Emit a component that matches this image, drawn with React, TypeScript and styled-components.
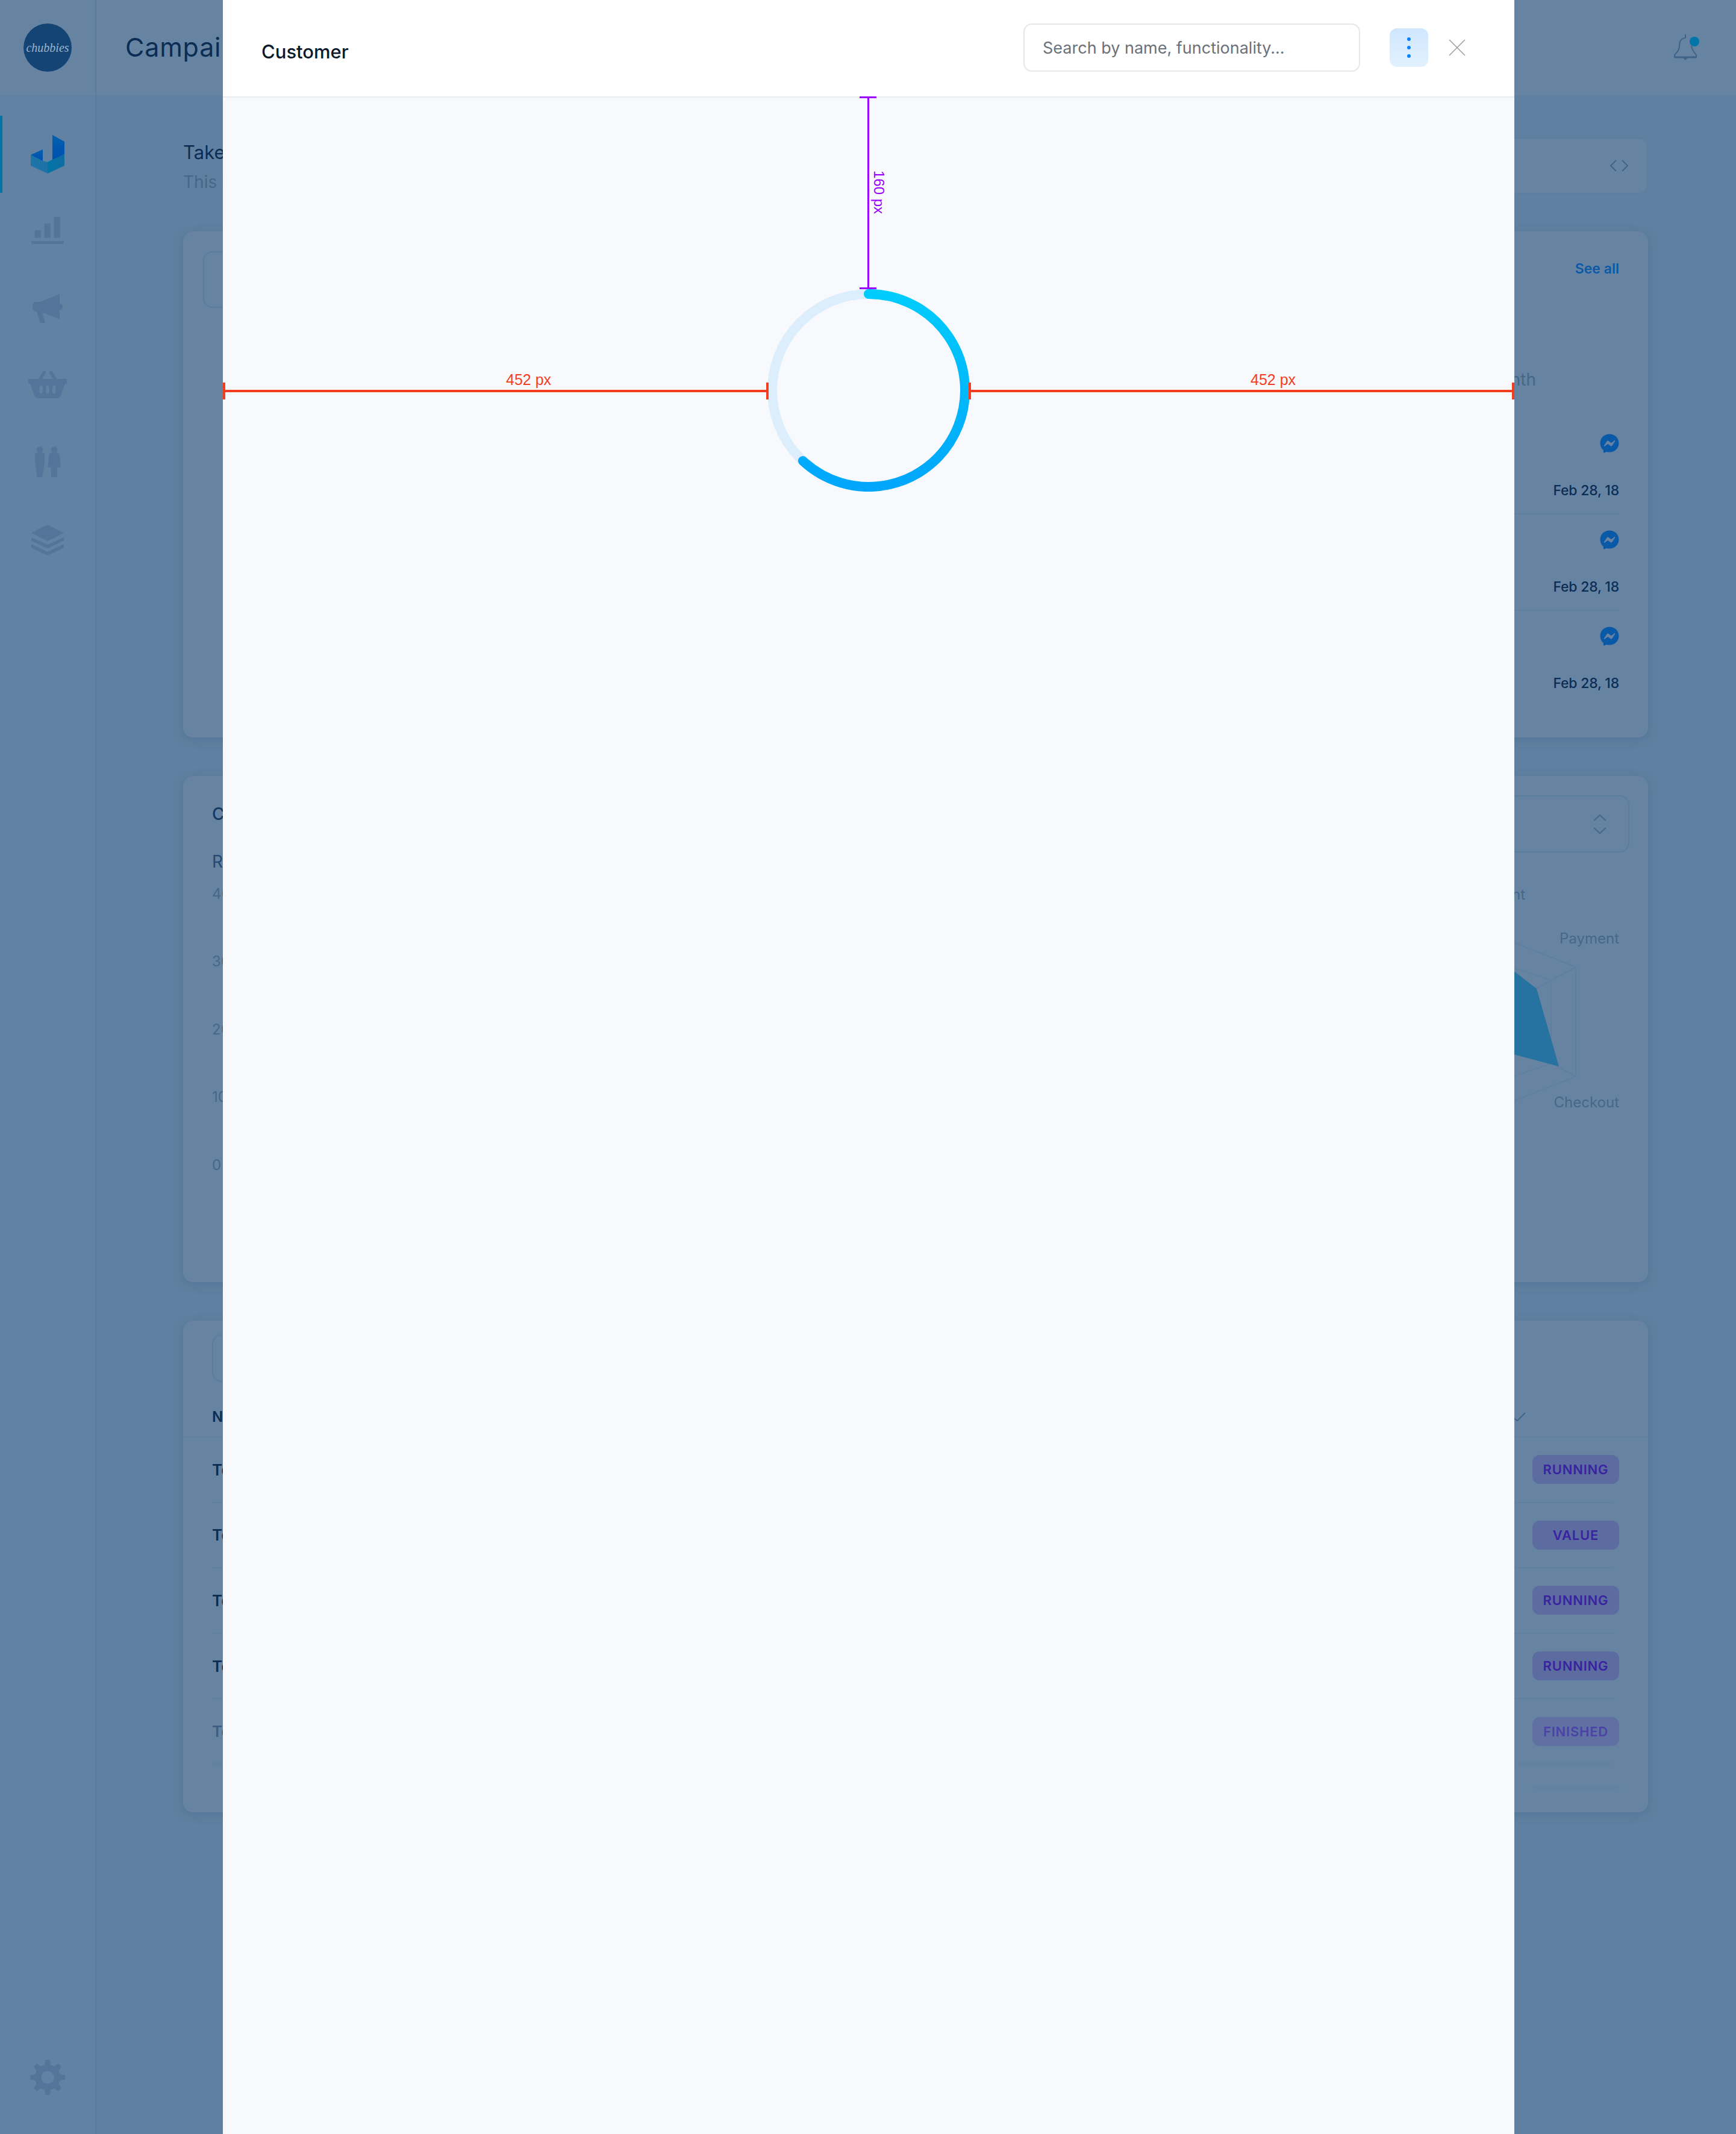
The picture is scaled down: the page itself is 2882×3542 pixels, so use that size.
import React from "react";
import styled, { createGlobalStyle } from "styled-components";
import { FaFacebookMessenger } from "react-icons/fa";

const GlobalStyle = createGlobalStyle`
  body {
    margin: 0;
    background: #5f80a0;
    font-family: Inter, "Noto Sans", sans-serif;
  }
`;

const Page = styled.div`
  position: relative;
  display: flex;
  width: 2882px;
  height: 3542px;
  overflow: hidden;
  background: #5f80a0;
`;

/* sidebar */

const Sidebar = styled.aside`
  flex: 0 0 160px;
  box-sizing: border-box;
  display: flex;
  flex-direction: column;
  background: #6182a2;
  border-right: 2px solid #5a7b9b;
  padding-bottom: 64px;
`;

const LogoCell = styled.div`
  flex: 0 0 160px;
  box-sizing: border-box;
  display: flex;
  align-items: center;
  justify-content: center;
  background: #6684a2;
  border-bottom: 2px solid #5e7f9f;
`;

const Logo = styled.div`
  width: 80px;
  height: 80px;
  border-radius: 50%;
  background: #134474;
  color: #9db6cf;
  display: flex;
  align-items: center;
  justify-content: center;
  font-family: "Liberation Serif", serif;
  font-style: italic;
  font-size: 20px;
`;

const Nav = styled.nav`
  display: flex;
  flex-direction: column;
  padding-top: 32px;
`;

const NavItem = styled.div<{ $active?: boolean; $lift?: boolean }>`
  box-sizing: border-box;
  height: 128px;
  display: flex;
  align-items: center;
  justify-content: center;
  padding-bottom: ${({ $lift }) => ($lift ? "3px" : "0")};
  box-shadow: ${({ $active }) => ($active ? "inset 4px 0 0 #0075aa" : "none")};
`;

const SettingsItem = styled.div`
  margin-top: auto;
  display: flex;
  justify-content: center;
`;

/* page behind the panel */

const Main = styled.main`
  flex: 1;
  display: flex;
  flex-direction: column;
`;

const Topbar = styled.header`
  flex: 0 0 160px;
  box-sizing: border-box;
  display: flex;
  align-items: center;
  justify-content: space-between;
  padding: 0 59px 0 48px;
  background: #6684a2;
  border-bottom: 2px solid #5e7f9f;
`;

const Title = styled.h1`
  margin: 0 0 3px;
  font-size: 43px;
  font-weight: 400;
  letter-spacing: 0.8px;
  color: #0b2d54;
`;

const Content = styled.div`
  display: flex;
  flex-direction: column;
  gap: 64px;
  padding: 68px 146px 0 144px;
`;

const IntroRow = styled.div`
  display: flex;
  justify-content: space-between;
  height: 94px;
  margin-bottom: -2px;
`;

const IntroText = styled.div`
  display: flex;
  flex-direction: column;
  padding-top: 1px;
`;

const IntroTitle = styled.div`
  font-size: 31px;
  line-height: 48px;
  color: #0b2d54;
`;

const IntroSub = styled.div`
  font-size: 28px;
  line-height: 50px;
  color: #456788;
`;

const CodeBox = styled.div`
  width: 1200px;
  box-sizing: border-box;
  display: flex;
  align-items: center;
  justify-content: flex-end;
  padding-right: 30px;
  border: 2px solid #5d7f9f;
  border-radius: 16px;
  background: #6684a2;
`;

const Card = styled.section<{ $height: number }>`
  box-sizing: border-box;
  height: ${({ $height }) => $height}px;
  background: #6684a2;
  border-radius: 16px;
  box-shadow: 0 4px 16px rgba(60, 95, 130, 0.3);
  overflow: hidden;
`;

const SplitCard = styled(Card)`
  display: flex;
  justify-content: space-between;
  align-items: flex-start;
`;

const OutlineBox = styled.div<{ $width: number; $height: number }>`
  width: ${({ $width }) => $width}px;
  height: ${({ $height }) => $height}px;
  box-sizing: border-box;
  border: 2px solid #5b7d9d;
  border-radius: 16px;
  display: flex;
  align-items: center;
  justify-content: flex-end;
  padding-right: 36px;
`;

const InsetLeft = styled.div`
  padding: 33px 0 0 33px;
`;

const ActivityColumn = styled.div`
  width: 400px;
  margin-right: 48px;
  padding-top: 46px;
  display: flex;
  flex-direction: column;
  align-items: stretch;
`;

const SeeAll = styled.a`
  align-self: flex-end;
  font-size: 23px;
  line-height: 32px;
  font-weight: 600;
  color: #0a58a8;
`;

const MonthLabel = styled.div`
  align-self: flex-end;
  margin: 148px 138px 0 0;
  font-size: 28px;
  line-height: 40px;
  color: #456788;
`;

const ActivityList = styled.div`
  margin-top: 44px;
`;

const ActivityRow = styled.div`
  box-sizing: border-box;
  height: 160px;
  padding-top: 26px;
  display: flex;
  flex-direction: column;
  align-items: flex-end;
  border-bottom: 2px solid #617f9e;

  &:last-child {
    border-bottom: none;
  }
`;

const MessengerIcon = styled(FaFacebookMessenger)`
  width: 32px;
  height: 32px;
  color: #0a58a8;
`;

const DateText = styled.div`
  margin-top: 47px;
  font-size: 23px;
  font-weight: 500;
  line-height: 30px;
  letter-spacing: -0.2px;
  color: #0b2d54;
`;

const ChartLeft = styled.div`
  padding: 43px 0 0 48px;
  display: flex;
  flex-direction: column;
`;

const ChartTitle = styled.div`
  font-size: 28px;
  line-height: 40px;
  font-weight: 500;
  color: #123a63;
`;

const ChartSubtitle = styled.div`
  margin-top: 39px;
  font-size: 28px;
  line-height: 40px;
  color: #244a72;
`;

const AxisList = styled.div`
  margin-top: 18px;
  display: flex;
  flex-direction: column;
  gap: 80.4px;
`;

const AxisLabel = styled.div`
  font-size: 24px;
  line-height: 32px;
  color: #456788;
`;

const ChartRight = styled.div`
  width: 505px;
  margin-right: 31px;
  padding-top: 32px;
  display: flex;
  flex-direction: column;
  align-items: flex-end;
`;

const RadarSvg = styled.svg`
  display: block;
  font-family: Inter, sans-serif;
  font-size: 24px;
`;

const TableTools = styled.div`
  padding: 23px 0 0 48px;
`;

const TableHead = styled.div`
  height: 92px;
  box-sizing: border-box;
  padding: 24px 203px 0 48px;
  display: flex;
  align-items: center;
  justify-content: space-between;
  border-bottom: 2px solid #617f9e;
`;

const HeadCell = styled.div`
  font-size: 24px;
  font-weight: 600;
  color: #0b2d54;
`;

const TableRow = styled.div`
  box-sizing: border-box;
  height: 108.6px;
  margin: 0 58px 0 48px;
  display: flex;
  align-items: center;
  justify-content: space-between;
  border-bottom: 2px solid #617f9e;
`;

const RowName = styled.div<{ $faded?: boolean }>`
  font-size: 26px;
  font-weight: 600;
  color: ${({ $faded }) => ($faded ? "#3c5f83" : "#0b2d54")};
`;

const Badge = styled.div<{ $faded?: boolean }>`
  box-sizing: border-box;
  width: 144px;
  height: 48px;
  margin-right: -10px;
  border-radius: 12px;
  display: flex;
  align-items: center;
  justify-content: center;
  font-size: 22px;
  font-weight: 600;
  letter-spacing: 0.8px;
  background: ${({ $faded }) => ($faded ? "#6070a3" : "#5c6ca0")};
  color: ${({ $faded }) => ($faded ? "#4b42a6" : "#3a22a0")};
`;

const FadedBadgeEdge = styled.div`
  width: 144px;
  height: 6px;
  margin: 35px 48px 0 auto;
  background: #6076a2;
  opacity: 0.3;
  filter: blur(3px);
`;

/* customer panel */

const Panel = styled.div`
  position: absolute;
  top: 0;
  left: 370px;
  bottom: 0;
  width: 2144px;
  display: flex;
  flex-direction: column;
  background: #f8f9fd;
`;

const PanelHeader = styled.header`
  flex: 0 0 162px;
  box-sizing: border-box;
  display: flex;
  align-items: center;
  padding: 0 81px 2px 64px;
  background: #fff;
  border-bottom: 2px solid #e9ebf0;
`;

const PanelTitle = styled.h2`
  flex: 1;
  margin: 13px 0 0;
  font-size: 31px;
  font-weight: 500;
  color: #0a1a2b;
`;

const SearchBox = styled.input`
  width: 559px;
  height: 80px;
  box-sizing: border-box;
  padding: 0 30px;
  border: 2px solid #e6e7ea;
  border-radius: 14px;
  background: #fff;
  font-family: Inter, sans-serif;
  font-size: 27px;

  &::placeholder {
    color: #6b7178;
    opacity: 1;
  }
`;

const MenuButton = styled.button`
  width: 64px;
  height: 64px;
  margin-left: 49px;
  padding: 0;
  border: none;
  border-radius: 12px;
  background: linear-gradient(180deg, #cfe6fd, #e2f1ff);
  display: flex;
  flex-direction: column;
  align-items: center;
  justify-content: center;
  gap: 8px;
`;

const MenuDot = styled.span`
  width: 6px;
  height: 6px;
  border-radius: 50%;
  background: #0a84ff;
`;

const CloseButton = styled.button`
  width: 28px;
  height: 28px;
  margin-left: 34px;
  padding: 0;
  border: none;
  background: none;
  display: block;
`;

const PanelBody = styled.div`
  flex: 1;
  position: relative;
  display: flex;
  justify-content: center;
  align-items: flex-start;
  padding-top: 318px;
`;

const Spinner = styled.svg`
  display: block;
`;

const HMeasure = styled.div<{ $left: number; $width: number }>`
  position: absolute;
  top: 485px;
  left: ${({ $left }) => $left}px;
  width: ${({ $width }) => $width}px;
  height: 4px;
  background: #f43c1e;

  &::before,
  &::after {
    content: "";
    position: absolute;
    top: -12px;
    width: 4px;
    height: 28px;
    background: #f43c1e;
  }

  &::before {
    left: 0;
  }

  &::after {
    right: 0;
  }
`;

const HLabel = styled.span<{ $left: number }>`
  position: absolute;
  left: ${({ $left }) => $left}px;
  top: -32px;
  font-family: "Liberation Sans", Arial, sans-serif;
  font-size: 25px;
  line-height: 30px;
  color: #f43c1e;
`;

const VMeasure = styled.div`
  position: absolute;
  top: -2px;
  left: 1070px;
  width: 3px;
  height: 320px;
  background: #9a00ff;

  &::before,
  &::after {
    content: "";
    position: absolute;
    left: -13px;
    width: 28px;
    height: 3px;
    background: #9a00ff;
  }

  &::before {
    top: 0;
  }

  &::after {
    bottom: 0;
  }
`;

const VLabel = styled.span`
  position: absolute;
  top: 123px;
  left: 6px;
  writing-mode: vertical-rl;
  font-family: "Liberation Sans", Arial, sans-serif;
  font-size: 24px;
  line-height: 26px;
  color: #9a00ff;
`;

const iconFill = "#53759a";

const BrandIcon = () => (
  <svg width="56" height="64" viewBox="0 0 56 64">
    <defs>
      <linearGradient id="brandUp" x1="0" y1="0" x2="0" y2="1">
        <stop offset="0" stopColor="#0161ad" />
        <stop offset="1" stopColor="#004eb0" />
      </linearGradient>
      <linearGradient id="brandBand" x1="0" y1="0" x2="1" y2="0">
        <stop offset="0" stopColor="#1e74a8" />
        <stop offset="0.5" stopColor="#1d73a8" />
        <stop offset="0.5" stopColor="#0074a6" />
        <stop offset="1" stopColor="#116ca0" />
      </linearGradient>
    </defs>
    <path d="M36 0 56 11V32L36 42Z" fill="url(#brandUp)" />
    <path d="M20 24V44L0 33Z" fill="url(#brandUp)" />
    <path d="M0 33 20 43 28 45 36 41 56 32V51L28 64 0 51Z" fill="url(#brandBand)" />
  </svg>
);

const BarsIcon = () => (
  <svg width="54" height="45" viewBox="0 0 54 45" fill={iconFill}>
    <rect x="5.5" y="22" width="10.5" height="13" />
    <rect x="21.5" y="11" width="10.5" height="24" />
    <rect x="37.5" y="0" width="10.5" height="35" />
    <path d="M0 40H54V42A3 3 0 0 1 51 45H3A3 3 0 0 1 0 42Z" />
  </svg>
);

const MegaphoneIcon = () => (
  <svg width="50" height="48" viewBox="0 0 50 48" fill={iconFill}>
    <path d="M45 0V42L13 29H6A6 6 0 0 1 0 23V19A6 6 0 0 1 6 13H13Z" />
    <circle cx="44" cy="21" r="6" />
    <path d="M7 29H16L21 48H13Z" />
  </svg>
);

const BasketIcon = () => (
  <svg width="64" height="45" viewBox="0 0 64 45" fill={iconFill}>
    <path
      fillRule="evenodd"
      d="M0 13H64V21H61L53 42Q52 45 49 45H15Q12 45 11 42L3 21H0ZM21 24Q18.500 24 18.500 26.500V34.500Q18.500 37 21 37T24 34.500V26.500Q24 24 21 24ZM32 24Q29.300 24 29.300 26.500V34.500Q29.300 37 32 37T34.700 34.500V26.500Q34.700 24 32 24ZM43 24Q40 24 40 26.500V34.500Q40 37 43 37T45.500 34.500V26.500Q45.500 24 43 24Z"
    />
    <path d="M20 13 26.500 2M44 13 37.500 2" stroke={iconFill} strokeWidth="5.500" strokeLinecap="round" />
  </svg>
);

const PeopleIcon = () => (
  <svg width="43" height="51" viewBox="0 0 43 51" fill={iconFill}>
    <circle cx="8" cy="5.500" r="5.300" />
    <path d="M4 10.500H12.500Q16.300 10.500 16.300 14.500V25L12.500 51H3.500L0 25V14.500Q0 10.500 4 10.500Z" />
    <circle cx="32" cy="5.500" r="5.300" />
    <path d="M27 10.500H37Q40.300 10.500 40.700 14L43 34.500H37L36.800 51H27L26.500 34.500H21.300L23.500 14Q24 10.500 27 10.500Z" />
  </svg>
);

const LayersIcon = () => (
  <svg width="54" height="51" viewBox="0 0 54 51" fill={iconFill}>
    <path d="M27 0 54 13.500 27 27 0 13.500Z" />
    <path d="M0 21 27 33 54 21V26.500L27 39 0 26.500Z" />
    <path d="M0 32 27 45 54 32V38L27 51 0 38Z" />
  </svg>
);

const GearIcon = () => (
  <svg width="60" height="60" viewBox="-30 -30 60 60" fill={iconFill}>
    <circle r="16" fill="none" stroke={iconFill} strokeWidth="10.500" />
    {[0, 45, 90, 135, 180, 225, 270, 315].map((angle) => (
      <path key={angle} d="M-3.500 -29H3.500L5.500 -19H-5.500Z" transform={`rotate(${angle})`} />
    ))}
  </svg>
);

const BellIcon = () => (
  <svg width="46" height="44" viewBox="0 0 46 44" fill="none">
    <path
      d="M21 0V6M21 6C14 6 11 12 11 19C11 27 6 31 3 34V38H39V34C36 31 32 27 31 19"
      stroke="#3f6387"
      strokeWidth="2"
    />
    <path d="M3 38H39" stroke="#3f6387" strokeWidth="3" />
    <path d="M17 39H25L21 43Z" fill="#3f6387" />
    <circle cx="36" cy="12" r="8" fill="#0075aa" />
  </svg>
);

const CodeIcon = () => (
  <svg width="32" height="20" viewBox="0 0 32 20" fill="none" stroke="#3f6387" strokeWidth="2">
    <path d="M11 1 2 10 11 19M21 1 30 10 21 19" />
  </svg>
);

const SortIcon = () => (
  <svg width="22" height="34" viewBox="0 0 22 34" fill="none" stroke="#41678a" strokeWidth="2">
    <path d="M1 11 11 2 21 11M1 23 11 32 21 23" />
  </svg>
);

const CheckIcon = () => (
  <svg width="24" height="15" viewBox="0 0 24 15" fill="none" stroke="#3f6387" strokeWidth="2">
    <path d="M0 7 10 14 23 1" />
  </svg>
);

const RadarChart = () => (
  <RadarSvg width="505" height="440" viewBox="2200 1415 505 440">
    <g fill="none" stroke="#5e7f9e" strokeWidth="2">
      <path d="M2200 1440 2616 1605V1787L2200 1950" />
      <path d="M2300 1535 2575 1627V1765L2300 1860" />
      <path d="M2400 1610 2535 1649V1741L2400 1790" />
      <path d="M2616 1605 2535 1649M2616 1787 2535 1741" />
    </g>
    <path d="M2400 1525 2551 1641 2588 1770 2400 1720Z" fill="#2672a0" />
    <g fill="#456788">
      <text x="2532" y="1493" textAnchor="end">Engagement</text>
      <text x="2688" y="1566" textAnchor="end">Payment</text>
      <text x="2688" y="1838" textAnchor="end">Checkout</text>
    </g>
  </RadarSvg>
);

const activityRows = ["a", "b", "c"];
const axisValues = ["400", "300", "200", "100", "0"];
const tableRows = [
  { name: "Test", status: "RUNNING" },
  { name: "Test", status: "VALUE" },
  { name: "Test", status: "RUNNING" },
  { name: "Test", status: "RUNNING" },
  { name: "Test", status: "FINISHED", faded: true },
];

const App = () => {
  return (
    <Page>
      <GlobalStyle />
      <Sidebar>
        <LogoCell>
          <Logo>chubbies</Logo>
        </LogoCell>
        <Nav>
          <NavItem $active>
            <BrandIcon />
          </NavItem>
          <NavItem $lift>
            <BarsIcon />
          </NavItem>
          <NavItem>
            <MegaphoneIcon />
          </NavItem>
          <NavItem $lift>
            <BasketIcon />
          </NavItem>
          <NavItem $lift>
            <PeopleIcon />
          </NavItem>
          <NavItem>
            <LayersIcon />
          </NavItem>
        </Nav>
        <SettingsItem>
          <GearIcon />
        </SettingsItem>
      </Sidebar>

      <Main>
        <Topbar>
          <Title>Campain</Title>
          <BellIcon />
        </Topbar>
        <Content>
          <IntroRow>
            <IntroText>
              <IntroTitle>Take a look</IntroTitle>
              <IntroSub>This is</IntroSub>
            </IntroText>
            <CodeBox>
              <CodeIcon />
            </CodeBox>
          </IntroRow>

          <SplitCard $height={840}>
            <InsetLeft>
              <OutlineBox $width={360} $height={94} />
            </InsetLeft>
            <ActivityColumn>
              <SeeAll>See all</SeeAll>
              <MonthLabel>This month</MonthLabel>
              <ActivityList>
                {activityRows.map((row) => (
                  <ActivityRow key={row}>
                    <MessengerIcon />
                    <DateText>Feb 28, 18</DateText>
                  </ActivityRow>
                ))}
              </ActivityList>
            </ActivityColumn>
          </SplitCard>

          <SplitCard $height={840}>
            <ChartLeft>
              <ChartTitle>Conversion</ChartTitle>
              <ChartSubtitle>Revenue</ChartSubtitle>
              <AxisList>
                {axisValues.map((value) => (
                  <AxisLabel key={value}>{value}</AxisLabel>
                ))}
              </AxisList>
            </ChartLeft>
            <ChartRight>
              <OutlineBox $width={400} $height={95}>
                <SortIcon />
              </OutlineBox>
              <RadarChart />
            </ChartRight>
          </SplitCard>

          <Card $height={816}>
            <TableTools>
              <OutlineBox $width={360} $height={79} />
            </TableTools>
            <TableHead>
              <HeadCell>Name</HeadCell>
              <CheckIcon />
            </TableHead>
            {tableRows.map((row, index) => (
              <TableRow key={index}>
                <RowName $faded={row.faded}>{row.name}</RowName>
                <Badge $faded={row.faded}>{row.status}</Badge>
              </TableRow>
            ))}
            <FadedBadgeEdge />
          </Card>
        </Content>
      </Main>

      <Panel>
        <PanelHeader>
          <PanelTitle>Customer</PanelTitle>
          <SearchBox placeholder="Search by name, functionality..." />
          <MenuButton aria-label="More">
            <MenuDot />
            <MenuDot />
            <MenuDot />
          </MenuButton>
          <CloseButton aria-label="Close">
            <svg width="28" height="28" viewBox="0 0 28 28" fill="none" stroke="#9aa0a6" strokeWidth="1.600">
              <path d="M1 1 27 27M27 1 1 27" />
            </svg>
          </CloseButton>
        </PanelHeader>
        <PanelBody>
          <Spinner width="336" height="336" viewBox="0 0 336 336" fill="none">
            <defs>
              <linearGradient id="spinnerArc" x1="0" y1="0" x2="0" y2="1">
                <stop offset="0" stopColor="#00ccfc" />
                <stop offset="1" stopColor="#00a6fb" />
              </linearGradient>
            </defs>
            <circle cx="168" cy="168" r="160" stroke="#dcedfc" strokeWidth="16" />
            <path
              d="M168 8A160 160 0 1 1 58.900 285"
              stroke="url(#spinnerArc)"
              strokeWidth="16"
              strokeLinecap="round"
            />
          </Spinner>
          <HMeasure $left={0} $width={906}>
            <HLabel $left={470}>452 px</HLabel>
          </HMeasure>
          <HMeasure $left={1238} $width={906}>
            <HLabel $left={468}>452 px</HLabel>
          </HMeasure>
          <VMeasure>
            <VLabel>160 px</VLabel>
          </VMeasure>
        </PanelBody>
      </Panel>
    </Page>
  );
};

export default App;
